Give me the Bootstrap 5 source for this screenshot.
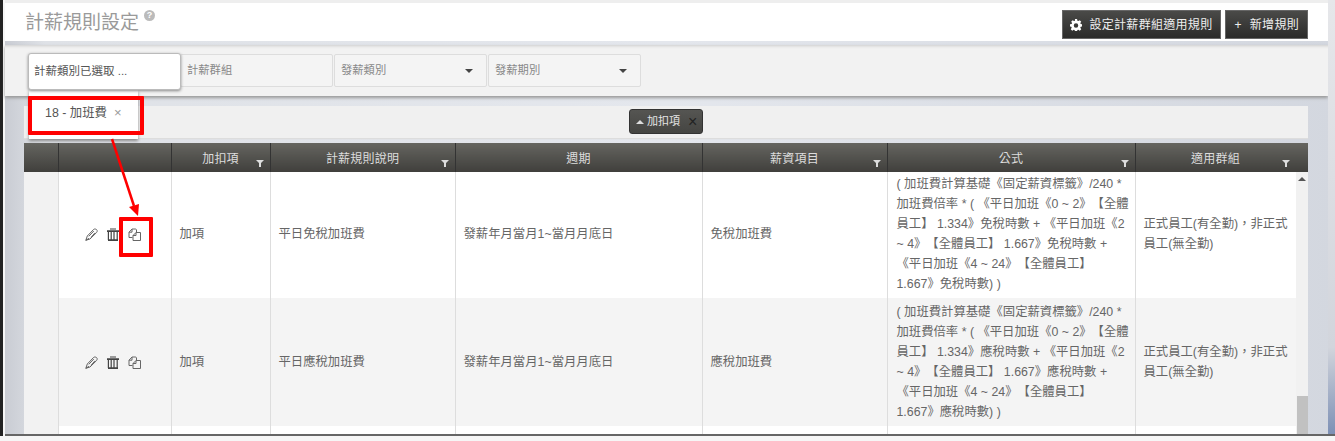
<!DOCTYPE html>
<html lang="zh-Hant">
<head>
<meta charset="utf-8">
<title>計薪規則設定</title>
<link href="https://cdn.jsdelivr.net/npm/bootstrap@5.3.0/dist/css/bootstrap.min.css" rel="stylesheet">
<style>
html,body{height:441px;overflow:hidden}
body{background:#f6f6f6;font-family:"Liberation Sans","Noto Sans CJK TC",sans-serif;font-size:12px;color:#666;position:relative;text-spacing-trim:space-all}
.edge{width:3px;height:436px;background:#222;flex:none}
.frame{height:436px;margin-left:2px;width:1330px;background:linear-gradient(90deg,#c9ccd3,#dfe2e7 3%,#e4e7ed 50%,#d3d7df);border-bottom:2px solid #666;padding-top:3px;flex:none;position:relative;box-shadow:inset 0 3px 0 #eee}
.frame::after{content:"";position:absolute;right:0;top:0;bottom:0;width:7px;background:linear-gradient(#e6e7ea,#d2d5dc 80%,#7d90b5 100%)}
.head{height:38px;background:#fff;margin-right:7px;padding:6px 20px 0 20px}
.title{font-size:19px;line-height:28px;color:#9a9a9a;margin:0;font-weight:400}
.help{display:inline-block;width:11px;height:11px;border-radius:50%;background:#bbb;color:#fff;font-size:9px;line-height:11px;text-align:center;font-weight:700;vertical-align:11px;margin-left:5px}
.dbtn{height:29px;margin-top:1px;background:linear-gradient(#4a4a48,#2b2b2a);border:1px solid #666;color:#eee;font-size:12px;border-radius:0;padding:0 8px 0 7px;letter-spacing:.3px;display:flex;align-items:center;gap:6px;white-space:nowrap}
.dbtn svg{margin-right:1px}
.plus{padding:0 2px 0 1px}
.filters{height:51px;margin-right:7px;background:#f2f2f2;margin-top:4px;box-shadow:0 2px 3px #999,inset 0 4px 3px -3px #ccc;padding:8px 0 0 175px;gap:1px}
.fld{width:153px;height:33px;margin-top:1px;border:1px solid #ddd;border-radius:2px;background:#f4f4f4;color:#888;font-size:11.300px;padding:0 6px;display:flex;align-items:center;justify-content:space-between}
.caret-d{width:0;height:0;border:4px solid transparent;border-top-color:#444;border-bottom:0;margin-right:7px}
.groupbar{height:32px;margin:10px 27px 0 19px;background:#f0f0f0;box-shadow:0 1px 1px #ddd;padding-top:3px}
.gchip{height:25px;width:74px;background:linear-gradient(#555552,#454542);border:1px solid #333;border-radius:3px;color:#e5e5e5;font-size:11px;display:flex;align-items:center;padding-left:6px;gap:3px}
.gchip b{font-weight:400;font-size:16px;color:#222;margin-left:5px;line-height:1}
.tri-u{width:0;height:0;border:4px solid transparent;border-bottom-color:#ddd;border-top:0}
.tblwrap{margin:5px 0 0 19px;width:1284px;height:291px;overflow:hidden;position:relative}
table.grid{table-layout:fixed;width:1284px;border-collapse:collapse;margin:0}
.grid th{height:29px;background:linear-gradient(#656560,#403f3c);color:#ddd;font-weight:400;text-align:center;font-size:12px;padding:2px 0 0;border-right:1px solid #333;position:relative;letter-spacing:.2px}
.grid th.lastc{padding-right:12px}
.grid td{border-right:1px solid #ddd;padding:0 0 2px 8px;vertical-align:middle;line-height:20px;font-size:12.350px;color:#666;white-space:nowrap;background:#fff}
.grid td.fml{padding-left:9px}
.grid tr.alt td{background:#f4f4f4;padding-bottom:0}
.grid td.stub{background:#f2f2f2!important;padding:0}
.r1{height:126px}.r2{height:128px}.r3{height:9px}
.flt{position:absolute;right:9px;bottom:5px;width:0;height:0}
.lastc .flt{right:21px}
.flt svg{position:absolute;right:-3px;bottom:0;display:block}
.acts{display:flex;justify-content:flex-end;gap:9px;align-items:center;padding-right:30px}
.scr{position:absolute;right:0;top:29px;width:12px;height:262px;background:#f1f1f1}
.scr i{position:absolute;left:2px;top:5px;width:0;height:0;border:4px solid transparent;border-bottom-color:#555;border-top:0}
.scr u{position:absolute;left:1px;right:0;bottom:0;height:38px;background:#c1c1c1}
.popin{position:absolute;left:28px;top:53px;width:153px;height:37px;background:#fff;border:1px solid #bbb;border-radius:3px;box-shadow:0 1px 3px #888;padding:0 5px;display:flex;align-items:center;font-size:11.500px;color:#555;z-index:3}
.pop{position:absolute;left:29px;top:90px;width:109px;height:49px;background:#fff;box-shadow:0 2px 3px #888;z-index:2;font-size:12.400px;color:#555;padding:14px 0 0 16px;display:flex;gap:7px}
.pop b{font-weight:400;color:#999;font-size:13px;line-height:18px}
.redbox{position:absolute;border:4px solid #f00;border-radius:1px;z-index:4}
.redbox.a{left:28px;top:96px;width:116px;height:39px}
.redbox.b{left:119px;top:217px;width:34px;height:40px}
.arrow{position:absolute;left:0;top:0;z-index:4;pointer-events:none}
</style>
</head>
<body class="d-flex m-0">
<div class="edge"></div>
<div class="frame">
  <div class="head d-flex justify-content-between">
    <h1 class="title">計薪規則設定<span class="help">?</span></h1>
    <div class="d-flex gap-1 align-items-start">
      <button class="dbtn" type="button"><svg width="12" height="12" viewBox="0 0 16 16"><path fill="#fff" fill-rule="evenodd" d="M6.600 0h2.800l.4 2.200 1.400.6L13 1.500l2 2-1.300 1.800.6 1.400 2.200.4v2.800l-2.200.4-.6 1.400 1.300 1.800-2 2-1.800-1.300-1.400.6-.4 2.200H6.600l-.4-2.200-1.400-.6L3 15.500l-2-2 1.300-1.800-.6-1.400L0 9.900V7.100l2.200-.4.6-1.400L1.500 3.500l2-2 1.800 1.300 1.400-.6zM8 5.500a3 3 0 1 0 0 6 3 3 0 0 0 0-6z"/></svg>設定計薪群組適用規則</button>
      <button class="dbtn" type="button"><span class="plus">+</span>新增規則</button>
    </div>
  </div>
  <div class="filters d-flex">
    <div class="fld">計薪群組</div>
    <div class="fld">發薪類別<i class="caret-d"></i></div>
    <div class="fld">發薪期別<i class="caret-d"></i></div>
  </div>
  <div class="groupbar d-flex justify-content-center"><div class="gchip"><i class="tri-u"></i>加扣項<b>×</b></div></div>
  <div class="tblwrap">
    <table class="grid">
      <colgroup><col style="width:34px"><col style="width:113px"><col style="width:99px"><col style="width:185px"><col style="width:247px"><col style="width:185px"><col style="width:248px"><col style="width:173px"></colgroup>
      <thead><tr>
        <th></th><th></th>
        <th>加扣項<span class="flt"><svg width="8" height="7" viewBox="0 0 8 7"><path fill="#ddd" d="M0 0h8L5 3v4H3V3z"/></svg></span></th>
        <th>計薪規則說明<span class="flt"><svg width="8" height="7" viewBox="0 0 8 7"><path fill="#ddd" d="M0 0h8L5 3v4H3V3z"/></svg></span></th>
        <th>週期</th>
        <th>薪資項目<span class="flt"><svg width="8" height="7" viewBox="0 0 8 7"><path fill="#ddd" d="M0 0h8L5 3v4H3V3z"/></svg></span></th>
        <th>公式<span class="flt"><svg width="8" height="7" viewBox="0 0 8 7"><path fill="#ddd" d="M0 0h8L5 3v4H3V3z"/></svg></span></th>
        <th class="lastc">適用群組<span class="flt"><svg width="8" height="7" viewBox="0 0 8 7"><path fill="#ddd" d="M0 0h8L5 3v4H3V3z"/></svg></span></th>
      </tr></thead>
      <tbody>
        <tr class="r1">
          <td class="stub"></td>
          <td><div class="acts">
            <svg width="13" height="13" viewBox="0 0 13 13" fill="none" stroke="#555" stroke-width=".9"><path d="M.8 12.300l1.500-4.300L8.500 1.500c1-.9 3-.6 3.600.9.300 1-.2 1.700-.8 2.400L5 11zM.8 12.300l3.200-2M3.800 8.300L8.800 3M6 9.300l4-4.500"/></svg>
            <svg width="12" height="13" viewBox="0 0 12 13" fill="none" stroke="#444"><path stroke-width="1.800" d="M0 3.200h12M1 12.100h10"/><path stroke-width="1.200" d="M1.400 3v9M4.200 3v9M7 3v9M10.200 3v9"/><path d="M3 1h6"/></svg>
            <svg width="13" height="13" viewBox="0 0 13 13" fill="none" stroke="#666"><path d="M4.500 9.500H1V4.200L4 1h3.500c.5 0 1 .5 1 1v2M4 1v3.200H1"/><path d="M8 4.500h4.500v8h-7.500V7.500zM8 4.500v3H5"/></svg>
          </div></td>
          <td>加項</td><td>平日免稅加班費</td><td>發薪年月當月1~當月月底日</td><td>免稅加班費</td>
          <td class="fml">( 加班費計算基礎《固定薪資標籤》/240 *<br>加班費倍率 * ( 《平日加班《0 ~ 2》【全體<br>員工】 1.334》免稅時數 + 《平日加班《2<br>~ 4》【全體員工】 1.667》免稅時數 +<br>《平日加班《4 ~ 24》【全體員工】<br>1.667》免稅時數) )</td>
          <td>正式員工(有全勤)，非正式<br>員工(無全勤)</td>
        </tr>
        <tr class="r2 alt">
          <td class="stub"></td>
          <td><div class="acts">
            <svg width="13" height="13" viewBox="0 0 13 13" fill="none" stroke="#555" stroke-width=".9"><path d="M.8 12.300l1.500-4.300L8.500 1.500c1-.9 3-.6 3.600.9.300 1-.2 1.700-.8 2.400L5 11zM.8 12.300l3.200-2M3.800 8.300L8.800 3M6 9.300l4-4.500"/></svg>
            <svg width="12" height="13" viewBox="0 0 12 13" fill="none" stroke="#444"><path stroke-width="1.800" d="M0 3.200h12M1 12.100h10"/><path stroke-width="1.200" d="M1.400 3v9M4.200 3v9M7 3v9M10.200 3v9"/><path d="M3 1h6"/></svg>
            <svg width="13" height="13" viewBox="0 0 13 13" fill="none" stroke="#666"><path d="M4.500 9.500H1V4.200L4 1h3.500c.5 0 1 .5 1 1v2M4 1v3.200H1"/><path d="M8 4.500h4.500v8h-7.500V7.500zM8 4.500v3H5"/></svg>
          </div></td>
          <td>加項</td><td>平日應稅加班費</td><td>發薪年月當月1~當月月底日</td><td>應稅加班費</td>
          <td class="fml">( 加班費計算基礎《固定薪資標籤》/240 *<br>加班費倍率 * ( 《平日加班《0 ~ 2》【全體<br>員工】 1.334》應稅時數 + 《平日加班《2<br>~ 4》【全體員工】 1.667》應稅時數 +<br>《平日加班《4 ~ 24》【全體員工】<br>1.667》應稅時數) )</td>
          <td>正式員工(有全勤)，非正式<br>員工(無全勤)</td>
        </tr>
        <tr class="r3"><td class="stub"></td><td></td><td></td><td></td><td></td><td></td><td></td><td></td></tr>
      </tbody>
    </table>
    <div class="scr"><i></i><u></u></div>
  </div>
</div>
<div class="popin">計薪類別已選取 ...</div>
<div class="pop">18 - 加班費<b>×</b></div>
<div class="redbox a"></div>
<div class="redbox b"></div>
<svg class="arrow" width="200" height="230" viewBox="0 0 200 230"><path d="M112 139L134 206" stroke="#f00" stroke-width="2.500"/><path fill="#f00" d="M129 207l10-3-1 12z"/></svg>
</body>
</html>
